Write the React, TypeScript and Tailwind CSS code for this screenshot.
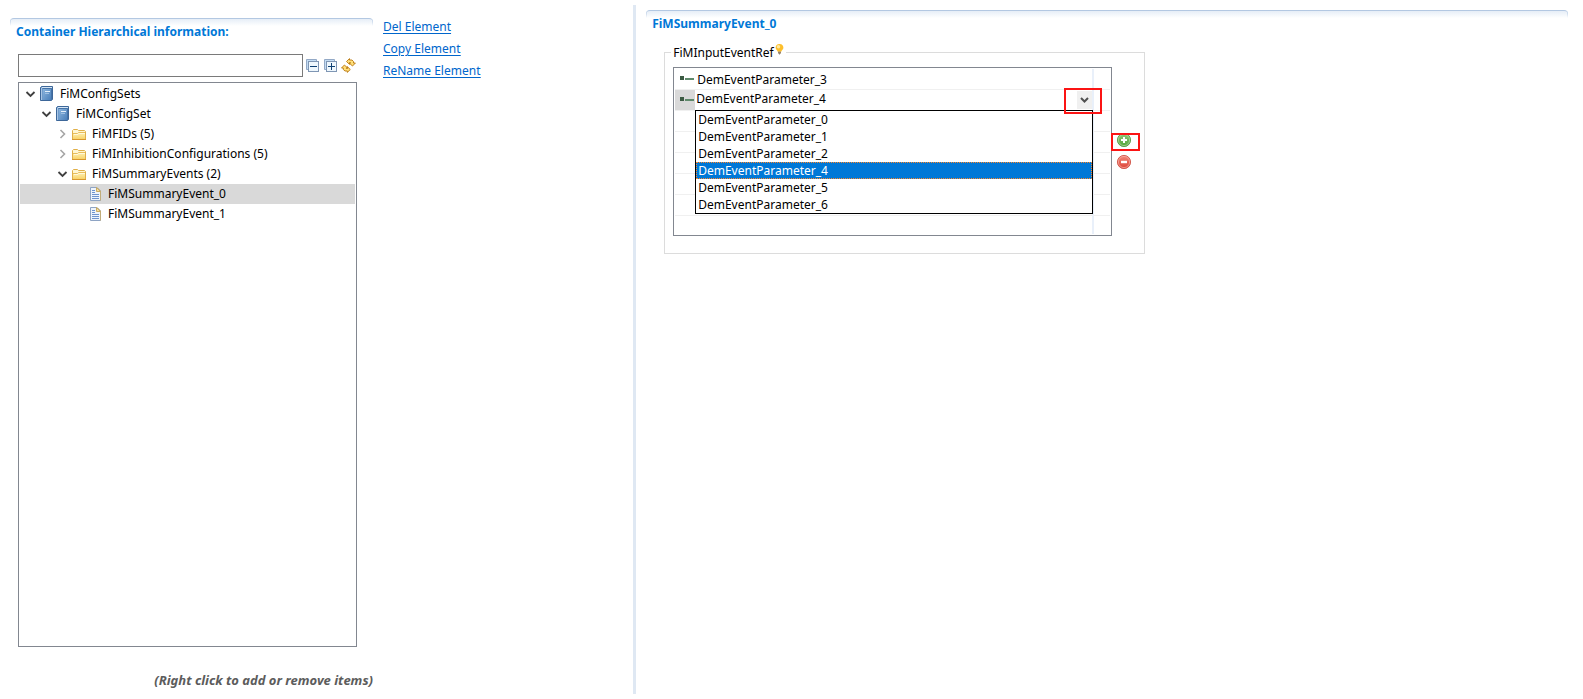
import React from "react";

function Book() {
  return (
    <svg width="16" height="16" viewBox="0 0 16 16" aria-hidden="true">
      <defs>
        <linearGradient id="cover" x1="0" y1="0" x2="1" y2="1">
          <stop offset="0" stopColor="#8ab4dc" />
          <stop offset="1" stopColor="#4a7fba" />
        </linearGradient>
      </defs>
      <path d="M1.5 1.5 L2.5 0.5 H13.5 V13.5 L12.5 14.5 H1.5 Z" fill="#6f9bcb" stroke="#3d6799" />
      <rect x="3" y="1" width="10" height="1" fill="#d5e5f4" />
      <rect x="2" y="2" width="1" height="12" fill="#a9c6e4" />
      <rect x="4" y="3" width="8" height="11" fill="url(#cover)" />
      <path d="M3.5 2.5 H12.5 V14" fill="none" stroke="#4573a8" />
      <rect x="6" y="5" width="5" height="1" fill="#e3effa" />
      <rect x="6" y="7" width="4" height="1" fill="#9fc0e2" />
    </svg>
  );
}

function Folder() {
  return (
    <svg width="16" height="16" viewBox="0 0 16 16" aria-hidden="true">
      <defs>
        <linearGradient id="flap" x1="0" y1="0" x2="0" y2="1">
          <stop offset="0" stopColor="#fdeeb0" />
          <stop offset="1" stopColor="#f8d36a" />
        </linearGradient>
      </defs>
      <path d="M1.5 13.5 V4.5 L2.5 3.5 H6.5 L7.5 4.5 H13.5 L14.5 5.5 V13.5 Z" fill="#fff6d2" stroke="#e0b04a" />
      <path d="M2 7.5 H6.5 L7.5 6.5 H14" fill="none" stroke="#e8bd5c" />
      <path d="M2 8 H7 L8 7 H14 V13 H2 Z" fill="url(#flap)" />
      <path d="M3 8.5 H7 L8 7.5 H14" fill="none" stroke="#fff8dc" />
      <path d="M1 13.5 H15" stroke="#d9982f" />
    </svg>
  );
}

function Doc() {
  return (
    <svg width="16" height="16" viewBox="0 0 16 16" aria-hidden="true">
      <path d="M3.5 1.5 H10 L13.5 5 V14.5 H3.5 Z" fill="#eef4fc" stroke="#8ea4c4" />
      <path d="M10 1.5 L13.5 5 V14.5" fill="none" stroke="#c0ad7c" />
      <path d="M9.5 1.5 V5.5 H13.5 Z" fill="#f5df9f" stroke="#c9ab66" />
      <path d="M5 4.5 H8 M5 6.5 H8 M5 8.5 H12 M5 10.5 H12 M5 12.5 H12" stroke="#6f94cf" />
    </svg>
  );
}

function BoxIcon({ plus }: { plus?: boolean }) {
  return (
    <svg width="13" height="13" viewBox="0 0 13 13" aria-hidden="true">
      <path d="M0.5 10.5 V0.5 H10.5 V2.5 H2.5 V10.5 Z" fill="#c3dcf3" stroke="#93a9c6" />
      <rect x="2.5" y="2.5" width="10" height="10" fill="#eef7fd" stroke="#7f96b4" />
      <path d="M4 7.5 H11" stroke="#0d3f73" />
      {plus && <path d="M7.5 4 V11" stroke="#0d3f73" />}
    </svg>
  );
}

function Refresh() {
  return (
    <svg width="15" height="15" viewBox="0 0 15 15" aria-hidden="true">
      <path
        d="M5.5 3.5 L8.5 0.6 V2 H11 L12.5 3.5 V5 H14.4 L11.5 8 L8.2 5 H9.5 V4.7 H8.5 V6.4 Z"
        fill="#ffdf78"
        stroke="#b9770f"
        strokeWidth="0.9"
      />
      <path
        d="M9.3 11.5 L6.3 14.4 V13 H4 L2.3 11.5 V10 H0.5 L3.4 7 L6.7 10 H5.3 V10.4 H6.3 V8.6 Z"
        fill="#ffdf78"
        stroke="#b9770f"
        strokeWidth="0.9"
      />
    </svg>
  );
}

function Bulb() {
  return (
    <svg width="9" height="11" viewBox="0 0 9 11" aria-hidden="true">
      <path d="M4.5 0 C7.4 0 8.4 2 8.4 3.8 C8.4 5.8 6.6 6 6.2 7.8 H2.8 C2.4 6 0.6 5.8 0.6 3.8 C0.6 2 1.6 0 4.5 0 Z" fill="#fdbf2d" />
      <ellipse cx="3.5" cy="2.8" rx="1.7" ry="1.8" fill="#ffeaa0" />
      <rect x="3" y="7.6" width="3" height="2" fill="#9a8468" />
      <rect x="4" y="9.4" width="1" height="1" fill="#6b625a" />
    </svg>
  );
}

function RefMark() {
  return (
    <svg width="16" height="16" viewBox="0 0 16 16" aria-hidden="true">
      <rect x="1" y="5" width="4" height="4" fill="#3c5a43" />
      <rect x="6" y="7" width="9" height="2" fill="#5f8a6b" />
    </svg>
  );
}

function Round({ kind }: { kind: "add" | "remove" }) {
  const add = kind === "add";
  const id = add ? "green" : "red";
  return (
    <svg width="16" height="16" viewBox="0 0 16 16" aria-hidden="true">
      <defs>
        <linearGradient id={id} x1="0" y1="0" x2="0" y2="1">
          <stop offset="0" stopColor={add ? "#94c97d" : "#f2897c"} />
          <stop offset="1" stopColor={add ? "#4fa336" : "#dc4134"} />
        </linearGradient>
      </defs>
      <circle cx="8" cy="8" r="6.6" fill={`url(#${id})`} stroke={add ? "#5a9a48" : "#d0564a"} strokeWidth="0.9" />
      <circle cx="8" cy="8" r="5.6" fill="none" stroke={add ? "#b5dba5" : "#f6b0a7"} strokeWidth="0.7" />
      <path
        d={add ? "M8 5 V11 M5 8 H11" : "M5 8 H11"}
        stroke="#fff"
        strokeWidth={add ? 2 : 2.4}
      />
    </svg>
  );
}

function Chevron({ open }: { open: boolean }) {
  return (
    <svg width="16" height="16" viewBox="0 0 16 16" aria-hidden="true">
      {open ? (
        <path d="M3.5 6 L7.5 10 L11.5 6" fill="none" stroke="#404040" strokeWidth="1.8" />
      ) : (
        <path d="M5.5 4 L9.5 8 L5.5 12" fill="none" stroke="#a6a6a6" strokeWidth="1.6" />
      )}
    </svg>
  );
}

function SectionHeader({ title }: { title: string }) {
  return (
    <header>
      <div className="flex h-2 overflow-hidden rounded-t-[4px] border-t border-[#b3c8e2] bg-linear-to-b from-[#e6eef7] to-white">
        <span className="h-full w-px bg-linear-to-b from-[#b3c8e2] to-white" />
        <span className="ml-auto h-full w-px bg-linear-to-b from-[#b3c8e2] to-white" />
      </div>
      <h2 className="-mt-[3px] px-1.5 text-[12px]/[18px] font-bold text-[#0078d7]">{title}</h2>
    </header>
  );
}

type Node = { label: string; level: number; icon: "book" | "folder" | "doc"; open?: boolean; selected?: boolean };

const nodes: Node[] = [
  { label: "FiMConfigSets", level: 1, icon: "book", open: true },
  { label: "FiMConfigSet", level: 2, icon: "book", open: true },
  { label: "FiMFIDs (5)", level: 3, icon: "folder", open: false },
  { label: "FiMInhibitionConfigurations (5)", level: 3, icon: "folder", open: false },
  { label: "FiMSummaryEvents (2)", level: 3, icon: "folder", open: true },
  { label: "FiMSummaryEvent_0", level: 4, icon: "doc", selected: true },
  { label: "FiMSummaryEvent_1", level: 4, icon: "doc" },
];

const indents = ["", "pl-[3px]", "pl-[19px]", "pl-[35px]", "pl-[67px]"];

function Tree() {
  return (
    <ul role="tree" aria-label="Containers" className="mr-4 ml-2 flex-1 border border-[#828790] bg-white p-px">
      {nodes.map((n) => (
        <li
          key={n.label}
          role="treeitem"
          aria-level={n.level}
          aria-expanded={n.open}
          aria-selected={!!n.selected}
          className={`flex h-5 items-center ${indents[n.level]} ${n.selected ? "bg-[#d9d9d9]" : ""}`}
        >
          {n.open !== undefined && (
            <button type="button" aria-label={n.open ? "Collapse" : "Expand"}>
              <Chevron open={n.open} />
            </button>
          )}
          {n.icon === "book" ? <Book /> : n.icon === "folder" ? <Folder /> : <Doc />}
          <span className="ml-[5px]">{n.label}</span>
        </li>
      ))}
    </ul>
  );
}

const options = [0, 1, 2, 4, 5, 6].map((n) => `DemEventParameter_${n}`);
const current = "DemEventParameter_4";

function ReferenceTable() {
  const line = "h-[21px] border-b border-[#f0f0f0] p-0";
  const side = "h-[21px] border-b border-l-2 border-b-[#f0f0f0] border-l-[#e9f0fa] p-0";
  return (
    <div className="min-w-0 flex-1 border border-[#828790] bg-white p-px">
      <table aria-label="FiMInputEventRef" className="w-full table-fixed border-separate border-spacing-0">
        <colgroup>
          <col />
          <col className="w-[18px]" />
        </colgroup>
        <tbody>
          <tr>
            <td className={line}>
              <div className="flex h-5 items-center pl-1">
                <RefMark />
                <span className="ml-0.5 pt-0.5">DemEventParameter_3</span>
              </div>
            </td>
            <td className={side} />
          </tr>
          <tr>
            <td className={line}>
              <div className="relative flex h-5 items-center">
                <span className="flex h-5 w-5 items-center bg-[#d9d9d9] pl-1">
                  <RefMark />
                </span>
                <div className="relative flex h-5 flex-1">
                  <select
                    aria-label="Event parameter"
                    defaultValue={current}
                    className="h-[18px] w-full appearance-none bg-white pl-px text-[12px]/[18px] outline-none"
                  >
                    {options.map((o) => (
                      <option key={o}>{o}</option>
                    ))}
                  </select>
                  <span className="pointer-events-none absolute top-px right-0 flex h-[18px] w-[15px] items-center justify-center bg-[#f0f0f0]">
                    <svg width="9" height="7" viewBox="0 0 9 7" aria-hidden="true">
                      <path d="M1 1 L4.5 4.5 L8 1" fill="none" stroke="#505050" strokeWidth="2" />
                    </svg>
                  </span>
                </div>
                <ul
                  role="listbox"
                  aria-label="Event parameters"
                  className="absolute top-full -right-px left-5 z-10 border border-black bg-white"
                >
                  {options.map((o) => (
                    <li
                      key={o}
                      role="option"
                      aria-selected={o === current}
                      className={`h-[17px] pl-0.5 leading-[17px] ${
                        o === current
                          ? "bg-[#0078d7] text-white outline-1 -outline-offset-1 outline-dotted outline-[#ff8728]"
                          : ""
                      }`}
                    >
                      {o}
                    </li>
                  ))}
                </ul>
                <span className="pointer-events-none absolute -top-0.5 -right-[10px] z-20 h-[26px] w-[38px] border-2 border-[#fb1414]" />
              </div>
            </td>
            <td className={side} />
          </tr>
          {[3, 4, 5, 6, 7].map((r) => (
            <tr key={r}>
              <td className={line} />
              <td className={side} />
            </tr>
          ))}
          <tr>
            <td className="h-[18px] p-0" />
            <td className="h-[18px] border-l-2 border-[#e9f0fa] p-0" />
          </tr>
        </tbody>
      </table>
    </div>
  );
}

export default function App() {
  return (
    <div className="flex h-screen bg-white py-[5px] font-['Noto_Sans','Noto_Sans_CJK_SC',sans-serif] text-[12px]/[18px] whitespace-nowrap text-black">
      <aside className="flex w-2/5 gap-2.5 pt-[13px] pl-2.5">
        <section className="flex w-[363px] flex-col">
          <SectionHeader title="Container Hierarchical information:" />
          <div className="mt-[13px] mr-[17px] mb-[5px] ml-2 flex items-center">
            <input
              type="text"
              aria-label="Filter"
              className="h-[23px] min-w-0 flex-1 border border-[#7a7a7a] bg-white px-1 outline-none"
            />
            <button type="button" aria-label="Collapse all" className="ml-[3px]">
              <BoxIcon />
            </button>
            <button type="button" aria-label="Expand all" className="ml-[5px]">
              <BoxIcon plus />
            </button>
            <button type="button" aria-label="Refresh" className="ml-1">
              <Refresh />
            </button>
          </div>
          <Tree />
          <p className="mt-6 mb-[5px] text-right text-[13px]/[18px] font-bold text-[#5c5c5c] italic">
            (Right click to add or remove items)
          </p>
        </section>
        <nav className="flex flex-col items-start gap-1 text-[#0066cc] underline underline-offset-2">
          <a href="#del">Del Element</a>
          <a href="#copy">Copy Element</a>
          <a href="#rename">ReName Element</a>
        </nav>
      </aside>
      <div role="separator" className="w-[3px] shrink-0 bg-[#dfe8f3]" />
      <main className="min-w-0 flex-1 pt-[5px] pr-[15px] pl-2.5">
        <SectionHeader title="FiMSummaryEvent_0" />
        <fieldset className="mt-2.5 ml-[18px] max-w-[481px] border border-[#dcdcdc] px-2 pt-1.5 pb-[17px]">
          <legend className="ml-[-2px] flex h-[18px] items-start px-0.5 pt-px">
            <span>FiMInputEventRef</span>
            <span className="ml-px">
              <Bulb />
            </span>
          </legend>
          <div className="flex items-center">
            <ReferenceTable />
            <div className="flex w-6 flex-col items-start gap-1.5 pb-0.5 pl-1">
              <button type="button" aria-label="Add" className="relative">
                <Round kind="add" />
                <span className="pointer-events-none absolute top-px -left-[5px] h-[18px] w-[29px] border-2 border-[#fb1414]" />
              </button>
              <button type="button" aria-label="Remove">
                <Round kind="remove" />
              </button>
            </div>
          </div>
        </fieldset>
      </main>
    </div>
  );
}
